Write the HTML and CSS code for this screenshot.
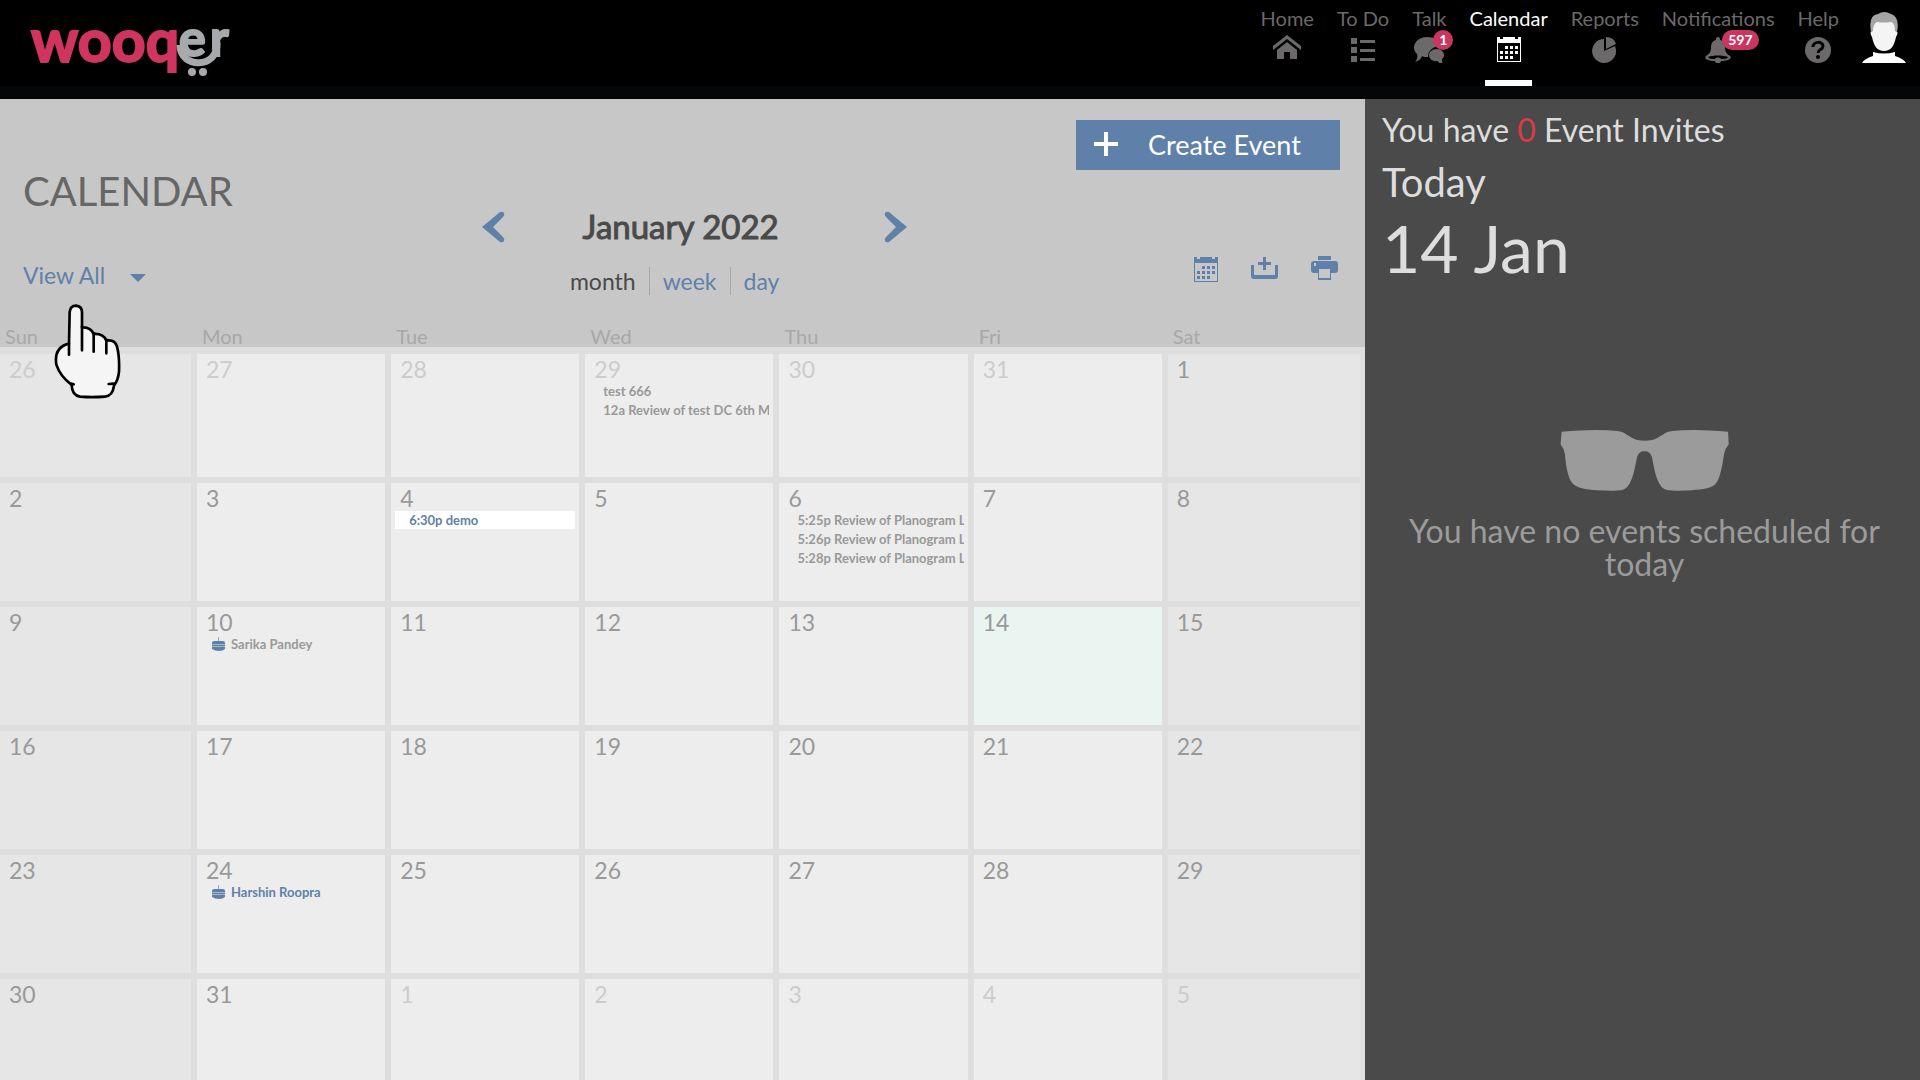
FILE: index.html
```html
<!DOCTYPE html>
<html lang="en">
<head>
    <meta charset="UTF-8">
    <title>Wooqer - Calendar</title>
    <link rel="stylesheet" href="styles.css">
</head>
<body>
    <svg class="defs" width="0" height="0">
        <symbol id="icon-calendar" viewBox="0 0 24 26">
            <path d="M0 1h3v2h3V1h12v2h3V1h3v25H0zM1 7v18h22V7z" fill-rule="evenodd"/>
            <path d="M8 10h3v3H8zm5 0h3v3h-3zm5 0h3v3h-3zM3 15h3v3H3zm5 0h3v3H8zm5 0h3v3h-3zm5 0h3v3h-3zM3 20h3v3H3zm5 0h3v3H8zm5 0h3v3h-3z"/>
        </symbol>
        <symbol id="icon-cake" viewBox="0 0 13 14">
            <path d="M6 0h1v4H6z" opacity=".6"/>
            <path d="M2 4h9q2 0 2 2v1H0V6q0-2 2-2zM0 8h13v1H0zM0 10h13v2q-2 2-6 2t-7-2z"/>
            <path d="M0 7h13v3H0z" opacity=".5"/>
        </symbol>
    </svg>

    <header class="header">
        <a href="#" class="logo">
            <svg width="230" height="90" viewBox="0 -20 230 90">
                <text x="1" y="42" class="logo-text">wooq</text>
                <text x="149" y="36" class="logo-grey">e</text>
                <text x="180" y="36" class="logo-grey">r</text>
                <path d="M150 25c0 24 38 24 37-2" class="logo-smile"/>
                <circle cx="162" cy="52" r="4" class="logo-wheel"/>
                <circle cx="173" cy="52" r="4" class="logo-wheel"/>
            </svg>
        </a>
        <nav class="nav">
            <a href="#" class="nav-item">Home
                <svg width="28" height="28" viewBox="0 0 28 28"><path d="M14 0l14 11v4L14 4 0 15v-4z"/><path d="M14 7l10 8v9h-7v-7h-6v7H4v-9z"/></svg>
            </a>
            <a href="#" class="nav-item">To Do
                <svg width="28" height="28" viewBox="0 0 28 28"><path d="M2 3h6v6H2zm0 9h6v6H2zm0 9h6v6H2zM11 5h15v3H11zm0 9h15v3H11zm0 9h15v3H11z"/></svg>
            </a>
            <a href="#" class="nav-item">Talk
                <svg width="30" height="28" viewBox="0 0 30 28"><path d="M13 2c7 0 13 3 13 9-6 0-12 4-12 11-3 0-5 0-6-1-1 3-3 5-7 6 2-2 3-5 2-8-2-2-3-4-3-6 0-6 5-11 13-11z"/><path d="M23 14c4 0 7 3 7 6 0 2-1 3-2 4 0 2 0 3 1 5-3 0-5-2-5-3-5 1-9-2-9-6 0-3 3-6 8-6z"/></svg>
                <span class="badge">1</span>
            </a>
            <a href="#" class="nav-item active">Calendar
                <svg width="24" height="28"><use href="#icon-calendar" width="24" height="28"/></svg>
            </a>
            <a href="#" class="nav-item">Reports
                <svg width="26" height="28" viewBox="0 0 26 28"><path d="M12 4v12l11-5A12 12 0 1 1 12 4z"/><path d="M14 2q8 0 10 7l-10 5z"/></svg>
            </a>
            <a href="#" class="nav-item">Notifications
                <svg width="28" height="28" viewBox="0 0 28 28"><path fill-rule="evenodd" d="M14 2c2 0 2 2 2 3 4 1 5 4 5 8 0 4 2 6 5 8 3 3-3 5-9 5 0 3-6 3-6 0-6 0-12-2-9-5 3-2 5-4 5-8 0-4 1-7 5-8 0-1 0-3 2-3zM4 22c1 2 4 2 7 2 1-2 5-2 6 0 3 0 6 0 7-2-5-2-15-2-20 0z"/></svg>
                <span class="badge">597</span>
            </a>
            <a href="#" class="nav-item">Help
                <svg width="28" height="28" viewBox="0 0 28 28"><circle cx="14" cy="15" r="13"/><path class="mark" d="M9 12c0-6 10-6 10-1 0 4-5 3-5 7"/><circle class="dot" cx="14" cy="22" r="2"/></svg>
            </a>
            <button class="avatar" aria-label="Profile">
                <svg width="44" height="52" viewBox="0 0 44 52">
                    <path fill="#fff" d="M0 51q2-4 11-7v-4q11 3 22 0v4q9 3 11 7z"/>
                    <path fill="#f4f4f4" d="M10 19q-3 1 0 6c2 9 5 14 12 14s10-5 12-14q3-5 0-6V8H10z"/>
                    <path fill="#a5a5a5" d="M9 20Q6 3 16 2q6-4 13 0 9 3 6 18l-2-1q0-8-4-9-8 1-14 0-4 2-4 9z"/>
                </svg>
            </button>
        </nav>
    </header>

    <main class="content">
        <section class="calendar">
            <div class="toolbar">
                <div class="toolbar-left">
                    <h1>CALENDAR</h1>
                    <label class="filter">
                        <select aria-label="Filter events"><option>View All</option></select>
                        <svg width="16" height="8" viewBox="0 0 16 8"><path d="M0 0h16L8 8z"/></svg>
                    </label>
                </div>
                <div class="toolbar-center">
                    <div class="month-row">
                        <button aria-label="Previous"><svg width="23" height="32" viewBox="0 0 23 32"><path d="M0 16L18 1q3-1 4 1 1 2-1 4L11 16l10 10q2 2 1 4-1 2-4 1z"/></svg></button>
                        <h2>January 2022</h2>
                        <button aria-label="Next"><svg width="23" height="32" viewBox="0 0 23 32"><path d="M23 16L5 1Q2 0 1 2q-1 2 1 4l10 10L2 26q-2 2-1 4 1 2 4 1z"/></svg></button>
                    </div>
                    <div class="views">
                        <button class="current">month</button>
                        <button>week</button>
                        <button>day</button>
                    </div>
                </div>
                <div class="toolbar-right">
                    <button class="create">
                        <svg width="24" height="24" viewBox="0 0 24 24"><path d="M10 0h4v10h10v4H14v10h-4V14H0v-4h10z"/></svg>
                        <span>Create Event</span>
                    </button>
                    <div class="tools">
                        <button aria-label="Go to date"><svg width="24" height="26"><use href="#icon-calendar"/></svg></button>
                        <button aria-label="Import"><svg width="27" height="26" viewBox="0 0 27 26"><path d="M12 1h3v5h5v3h-5v5h-3V9H7V6h5z"/><path d="M0 9h3v10h21V9h3v11q0 3-3 3H3q-3 0-3-3z"/></svg></button>
                        <button aria-label="Print"><svg width="27" height="26" viewBox="0 0 27 26"><path d="M7 0h13v4H7z"/><path fill-rule="evenodd" d="M3 5h21q3 0 3 3v6q0 3-3 3h-4v7H7v-7H3q-3 0-3-3V8q0-3 3-3zm0 2v3h2V7zm5 6v9h11v-9z"/></svg></button>
                    </div>
                </div>
            </div>

            <table class="month">
                <thead>
                    <tr><th class="first">Sun</th><th>Mon</th><th>Tue</th><th>Wed</th><th>Thu</th><th>Fri</th><th>Sat</th></tr>
                </thead>
                <tbody>
                    <tr>
                        <td class="other"><span class="num">26</span></td>
                        <td class="other"><span class="num">27</span></td>
                        <td class="other"><span class="num">28</span></td>
                        <td class="other"><span class="num">29</span>
                            <a href="#" class="event">test 666</a>
                            <a href="#" class="event">12a Review of test DC 6th March</a>
                        </td>
                        <td class="other"><span class="num">30</span></td>
                        <td class="other"><span class="num">31</span></td>
                        <td><span class="num">1</span></td>
                    </tr>
                    <tr>
                        <td><span class="num">2</span></td>
                        <td><span class="num">3</span></td>
                        <td><span class="num">4</span>
                            <a href="#" class="event mine open">6:30p demo</a>
                        </td>
                        <td><span class="num">5</span></td>
                        <td><span class="num">6</span>
                            <a href="#" class="event">5:25p Review of Planogram League</a>
                            <a href="#" class="event">5:26p Review of Planogram League</a>
                            <a href="#" class="event">5:28p Review of Planogram League</a>
                        </td>
                        <td><span class="num">7</span></td>
                        <td><span class="num">8</span></td>
                    </tr>
                    <tr>
                        <td><span class="num">9</span></td>
                        <td><span class="num">10</span>
                            <a href="#" class="event birthday"><svg width="13" height="14"><use href="#icon-cake"/></svg>Sarika Pandey</a>
                        </td>
                        <td><span class="num">11</span></td>
                        <td><span class="num">12</span></td>
                        <td><span class="num">13</span></td>
                        <td class="today"><span class="num">14</span></td>
                        <td><span class="num">15</span></td>
                    </tr>
                    <tr>
                        <td><span class="num">16</span></td>
                        <td><span class="num">17</span></td>
                        <td><span class="num">18</span></td>
                        <td><span class="num">19</span></td>
                        <td><span class="num">20</span></td>
                        <td><span class="num">21</span></td>
                        <td><span class="num">22</span></td>
                    </tr>
                    <tr>
                        <td><span class="num">23</span></td>
                        <td><span class="num">24</span>
                            <a href="#" class="event birthday mine"><svg width="13" height="14"><use href="#icon-cake"/></svg>Harshin Roopra</a>
                        </td>
                        <td><span class="num">25</span></td>
                        <td><span class="num">26</span></td>
                        <td><span class="num">27</span></td>
                        <td><span class="num">28</span></td>
                        <td><span class="num">29</span></td>
                    </tr>
                    <tr>
                        <td><span class="num">30</span></td>
                        <td><span class="num">31</span></td>
                        <td class="other"><span class="num">1</span></td>
                        <td class="other"><span class="num">2</span></td>
                        <td class="other"><span class="num">3</span></td>
                        <td class="other"><span class="num">4</span></td>
                        <td class="other"><span class="num">5</span></td>
                    </tr>
                </tbody>
            </table>
        </section>

        <aside class="sidebar">
            <p class="invites">You have <span class="count">0</span> Event Invites</p>
            <p class="today-label">Today</p>
            <p class="today-date">14 Jan</p>
            <div class="empty">
                <svg width="172" height="62" viewBox="519 87 501 184"><path d="M522 95q100-9 165-2c25 2 35 20 60 27q22 4 44 0c25-7 35-25 60-27q65-7 165 2l2 37q-11 12-14 30c-6 40-10 60-20 81-12 23-45 22-75 26-30 2-60 2-75-1-30-8-37-65-44-98q-6-18-22-17-16-1-22 17c-7 33-14 90-44 98-15 3-45 3-75 1-30-4-63-3-78-28-10-20-15-50-17-79q-3-18-13-30z"/></svg>
                <p>You have no events scheduled for today</p>
            </div>
        </aside>
    </main>

    <!-- hand pointing at the filter -->
    <svg class="hand" width="68" height="97" viewBox="160 460 204 291">
        <path d="M208 582l2-95q2-19 19-19 17 1 18 19v46q27-1 35 20 29-2 38 20 26-4 32 18 8 30 6 75-2 24-15 42-4 31-27 33-40 3-75 0-24-4-25-35-35-27-46-61-8-52 38-63z"/>
        <path d="M208 582v33M247 530v72M282 550v56M320 570v41M216 702l6 2M327 703l16-1"/>
    </svg>
</body>
</html>
```

FILE: styles.css
```css
* {
    box-sizing: border-box;
}

html, body {
    height: 100%;
}

body {
    margin: 0;
    display: flex;
    flex-direction: column;
    overflow: hidden;
    font-family: Lato, sans-serif;
    background: #4a4a4a;
}

h1, h2, p {
    margin: 0;
    font-weight: 400;
}

a {
    text-decoration: none;
}

button, select {
    padding: 0;
    border: none;
    background: none;
    font-family: inherit;
    color: #5f81a9;
    cursor: pointer;
}

svg {
    display: block;
    fill: currentColor;
}

.defs {
    position: absolute;
}

/* header */
.header {
    flex: none;
    display: flex;
    justify-content: space-between;
    height: 99px;
    padding: 0 14px 0 30px;
    background: linear-gradient(#000 86px, #040607 86px);
}

.logo-text, .logo-grey {
    font-weight: 700;
    stroke-width: 2;
}

.logo-text {
    font-size: 59px;
    fill: #d0355f;
    stroke: #d0355f;
}

.logo-grey {
    font-size: 50px;
    stroke: #a7a9ac;
}

.logo-grey, .logo-wheel {
    fill: #a7a9ac;
}

.logo-smile {
    fill: none;
    stroke: #a7a9ac;
    stroke-width: 7;
}

.nav {
    display: flex;
    gap: 23px;
}

.nav-item {
    position: relative;
    display: flex;
    flex-direction: column;
    align-items: center;
    gap: 4px;
    height: 86px;
    padding-top: 6px;
    font-size: 20px;
    line-height: 25px;
    color: #6b696a;
}

.nav-item.active {
    color: #fff;
}

.nav-item.active::after {
    content: "";
    width: 47px;
    height: 6px;
    margin-top: auto;
    background: #fff;
}

.badge {
    position: absolute;
    top: 30px;
    left: 50%;
    min-width: 20px;
    margin-left: 4px;
    padding: 0 6px;
    border-radius: 10px;
    background: #c9365f;
    color: #fff;
    font-size: 14px;
    font-weight: 700;
    line-height: 20px;
    text-align: center;
}

.mark {
    fill: none;
    stroke: #000;
    stroke-width: 3;
}

.dot {
    fill: #000;
}

.avatar {
    align-self: flex-start;
    margin-top: 12px;
}

/* main */
.content {
    flex: 1;
    display: flex;
    min-height: 0;
}

.calendar {
    flex: 1;
    padding-right: 3px;
    overflow: hidden;
    background: linear-gradient(#c7c7c7 248px, #dedede 248px);
}

.toolbar {
    display: grid;
    grid-template-columns: 35% 32% 33%;
    height: 226px;
    padding: 0 22px 0 23px;
}

h1 {
    margin-top: 68px;
    font-size: 40px;
    line-height: 48px;
    color: #666;
}

.filter {
    display: flex;
    align-items: center;
    gap: 23px;
    margin-top: 45px;
    color: #5f81a9;
}

.filter select {
    appearance: none;
    font-size: 23px;
    line-height: 30px;
}

.filter svg {
    margin-top: 6px;
}

.month-row {
    display: flex;
    align-items: center;
    justify-content: space-between;
    margin: 108px -2px 0;
}

.month-row h2 {
    padding: 0 28px 2px 0;
    font-size: 33px;
    line-height: 38px;
    color: #4a4a4a;
    -webkit-text-stroke: 1px #4a4a4a;
}

.views {
    display: flex;
    margin-top: 20px;
    padding-left: 86px;
}

.views button {
    padding: 0 13px;
    font-size: 23px;
    line-height: 28px;
}

.views button:first-child {
    padding-left: 0;
}

.views button + button {
    border-left: 1px solid #a8a8a8;
}

.views .current {
    color: #4a4a4a;
}

.toolbar-right {
    display: flex;
    flex-direction: column;
    align-items: flex-end;
    padding-top: 21px;
}

.create {
    display: flex;
    align-items: center;
    gap: 30px;
    width: 264px;
    height: 50px;
    padding: 0 18px 2px;
    background: #5f81a9;
    color: #fff;
    font-size: 27px;
}

.tools {
    display: flex;
    gap: 33px;
    margin: 86px 2px 0 0;
}

.month {
    width: 100%;
    table-layout: fixed;
    border-spacing: 0;
}

.month th {
    height: 29px;
    padding: 0 5px 7px;
    font-size: 20px;
    font-weight: 400;
    line-height: 22px;
    text-align: left;
    color: #a8a8a8;
}

.month .first {
    width: 197px;
}

.month td {
    height: 124px;
    padding: 3px 4px 0;
    border: solid #dedede;
    border-width: 0 6px 6px 0;
    background: #ededed;
    vertical-align: top;
    color: #999;
}

.month tr:first-child td {
    height: 129px;
}

.month td:first-child, .month td:last-child {
    background: #e6e6e6;
}

.month td:last-child {
    border-right-width: 2px;
}

.month .today {
    background: #eaf4f0;
}

.num {
    display: block;
    margin-left: 5px;
    font-size: 23px;
    line-height: 24px;
}

.other .num {
    color: #ccc;
}

.event {
    display: block;
    height: 18px;
    margin-top: 1px;
    padding-left: 14px;
    overflow: hidden;
    white-space: nowrap;
    font-size: 13px;
    font-weight: 700;
    line-height: 18px;
    color: #999;
}

.event.mine {
    color: #5f81a9;
}

.event.open {
    background: #fff;
}

.birthday {
    display: flex;
    align-items: center;
    gap: 6px;
    padding-left: 11px;
}

.birthday svg {
    color: #5f81a9;
}

/* sidebar */
.sidebar {
    flex: 0 0 555px;
    padding: 11px 13px 11px 17px;
    background: #4a4a4a;
    color: #ddd;
}

.invites {
    font-size: 32px;
    line-height: 40px;
}

.count {
    color: #dc3a45;
}

.today-label {
    margin-top: 8px;
    font-size: 40px;
    line-height: 48px;
}

.today-date {
    font-size: 66px;
    line-height: 84px;
}

.empty {
    display: flex;
    flex-direction: column;
    align-items: center;
    gap: 23px;
    margin-top: 139px;
    text-align: center;
    font-size: 32px;
    line-height: 33px;
    color: #9b9b9b;
}

.hand {
    position: absolute;
    top: 303px;
    left: 53px;
    fill: #f5f5f5;
    stroke: #000;
    stroke-width: 8;
    stroke-linecap: round;
    stroke-linejoin: round;
}
```
